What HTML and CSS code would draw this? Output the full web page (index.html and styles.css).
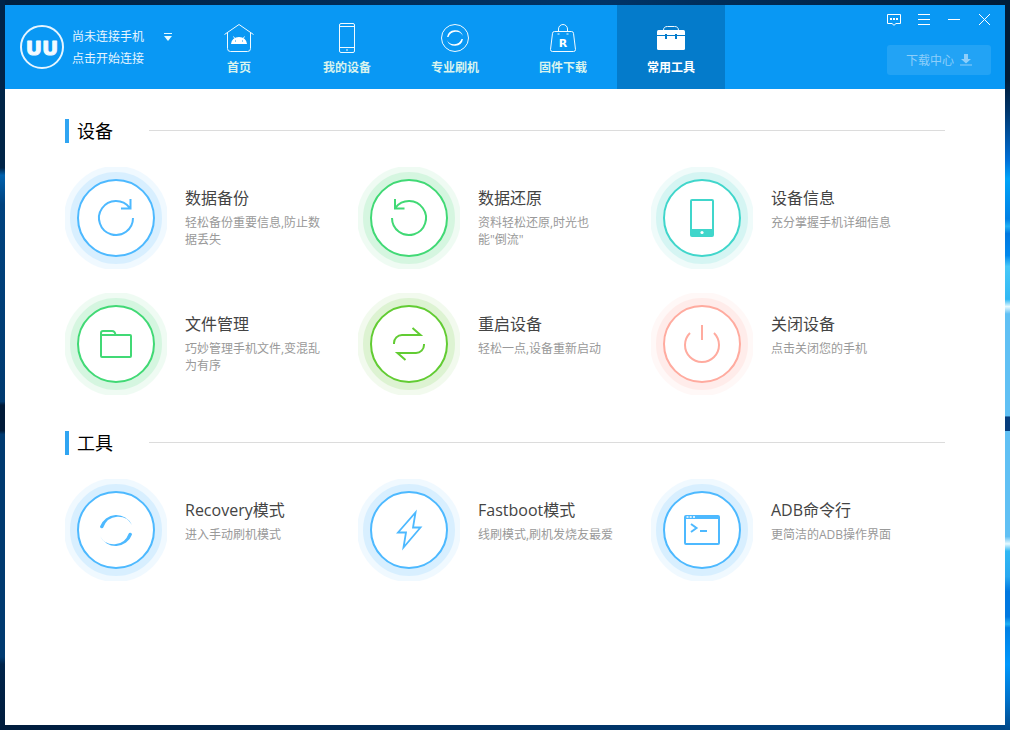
FILE: index.html
```html
<!DOCTYPE html>
<html lang="zh-CN">
<head>
<meta charset="utf-8">
<title>常用工具</title>
<link rel="stylesheet" href="styles.css">
</head>
<body>
<svg class="defs" aria-hidden="true">
  <symbol id="rings" viewBox="0 0 102 102">
    <circle cx="51" cy="51" r="51" fill="currentColor" opacity=".08"/>
    <circle cx="51" cy="51" r="45" fill="currentColor" opacity=".14"/>
    <circle cx="51" cy="51" r="38" fill="#fff" stroke="currentColor" stroke-width="2"/>
  </symbol>
</svg>
<div class="window">
  <header class="header">
    <div class="device">
      <svg class="logo" viewBox="0 0 44 44" role="img" aria-label="UU">
        <circle cx="22" cy="22" r="21" fill="none" stroke="#e6f5ff" stroke-width="2"/>
        <text class="logo-text" x="22" y="30" text-anchor="middle">UU</text>
      </svg>
      <div class="device-text">
        <div>尚未连接手机</div>
        <a href="#connect">点击开始连接</a>
      </div>
      <button class="device-menu" aria-label="选择设备">
        <svg viewBox="0 0 12 10"><path d="M2 1.500h8" stroke="#e6fbff"/><path d="M2 4h8L6 9z" fill="#e6fbff"/></svg>
      </button>
    </div>
    <nav class="nav">
      <a class="nav-item" href="#home">
        <svg class="nav-icon" viewBox="0 0 32 32">
          <path d="M1.500 12.500L16 2.500l14.500 10M4.500 10.500v16a3 3 0 0 0 3 3h17a3 3 0 0 0 3-3v-16"/>
          <path class="solid" d="M8 22a8 7 0 0 1 16 0z"/><path d="M10.500 14.500l2 3M21.500 14.500l-2 3"/>
          <path d="M12 19h1M19 19h1" stroke="#0998f4"/>
        </svg><span>首页</span></a>
      <a class="nav-item" href="#device">
        <svg class="nav-icon" viewBox="0 0 32 32">
          <rect x="8.500" y="1.500" width="15" height="29" rx="1.500"/><path d="M8.500 4.500h15M8.500 25.500h15M15 28h2"/>
        </svg><span>我的设备</span></a>
      <a class="nav-item" href="#flash">
        <svg class="nav-icon" viewBox="0 0 32 32">
          <circle cx="16" cy="16" r="13.500"/>
          <path id="small-arc" class="solid" d="M8 15A8.250 8.250 0 0 1 24 14A7.900 7.900 0 0 0 9.500 15z"/>
          <use href="#small-arc" transform="rotate(180 16 16)"/>
        </svg><span>专业刷机</span></a>
      <a class="nav-item" href="#firmware">
        <svg class="nav-icon" viewBox="0 0 32 32">
          <path d="M7.500 9.500h17a2 2 0 0 1 2 1.800l2 16.200a2 2 0 0 1-2 2h-21a2 2 0 0 1-2-2l2-16.200a2 2 0 0 1 2-1.800zM11.500 9.500V7a4.500 4.500 0 0 1 9 0v2.500"/>
          <path d="M10.500 12h2M19.500 12h2"/>
          <text class="bag-text" x="16" y="25" text-anchor="middle">R</text>
        </svg><span>固件下载</span></a>
      <a class="nav-item active" href="#tools" aria-current="page">
        <svg class="nav-icon" viewBox="0 0 32 32">
          <path d="M8.500 8.500c0-3 1.500-4 4-4h7c2.500 0 4 1 4 4"/>
          <rect class="solid" x="2" y="8" width="28" height="20" rx="1.500"/>
          <path d="M2 13.500h28" stroke="#047bcb"/><path d="M11 12v5M21 12v5" stroke="#047bcb" stroke-width="2"/>
        </svg><span>常用工具</span></a>
    </nav>
    <div class="header-side">
      <div class="controls">
        <button aria-label="反馈"><svg viewBox="0 0 14 14"><path d="M.5 2.500h13v9h-4.500l-2 1.800-2-1.800H.5z"/><path d="M3 7h2M6 7h2M9 7h2" stroke-width="2"/></svg></button>
        <button aria-label="菜单"><svg viewBox="0 0 14 14"><path d="M1 2.500h12M1 7.500h12M1 12.500h12"/></svg></button>
        <button aria-label="最小化"><svg viewBox="0 0 14 14"><path d="M1 7.500h12"/></svg></button>
        <button aria-label="关闭"><svg viewBox="0 0 14 14"><path d="M2 2l11 11M13 2L2 13"/></svg></button>
      </div>
      <button class="download">下载中心
        <svg viewBox="0 0 12 12"><path d="M4 0h4v5h3l-5 4.500L1 5h3zM0 10.500h12v1H0z" fill="currentColor"/></svg>
      </button>
    </div>
  </header>

  <main class="content">
    <section class="section">
      <h2 class="section-title">设备</h2>
      <div class="tools">
        <button class="tool">
          <svg class="emblem blue" viewBox="0 0 102 102"><use href="#rings"/>
            <path d="M68 51A17 17 0 1 1 64.500 40.700M65.500 32v9.500H56"/></svg>
          <span class="tool-text"><span class="tool-name">数据备份</span><span class="tool-desc">轻松备份重要信息,防止数据丢失</span></span>
        </button>
        <button class="tool">
          <svg class="emblem green" viewBox="0 0 102 102"><use href="#rings"/>
            <path d="M34 51A17 17 0 1 0 37.500 40.700M37 32v9.500h9.500"/></svg>
          <span class="tool-text"><span class="tool-name">数据还原</span><span class="tool-desc">资料轻松还原,时光也能"倒流"</span></span>
        </button>
        <button class="tool">
          <svg class="emblem teal" viewBox="0 0 102 102"><use href="#rings"/>
            <rect x="39" y="32" width="24" height="38" rx="2" fill="currentColor" stroke="none"/>
            <path d="M41 34h20v28H41z" fill="#fff" stroke="none"/><circle cx="51" cy="65.500" r="1.600" fill="#fff" stroke="none"/></svg>
          <span class="tool-text"><span class="tool-name">设备信息</span><span class="tool-desc">充分掌握手机详细信息</span></span>
        </button>
        <button class="tool">
          <svg class="emblem green" viewBox="0 0 102 102"><use href="#rings"/>
            <rect x="36" y="42" width="30" height="22" rx="1"/><path d="M36 43v-3a2 2 0 0 1 2-2h9q3 0 3.500 4"/></svg>
          <span class="tool-text"><span class="tool-name">文件管理</span><span class="tool-desc">巧妙管理手机文件,变混乱为有序</span></span>
        </button>
        <button class="tool">
          <svg class="emblem lime" viewBox="0 0 102 102"><use href="#rings"/>
            <path d="M36 51v-1a8 8 0 0 1 8-8h18.500l-8-7M66 51v1a8 8 0 0 1-8 8H39.500l8 7"/></svg>
          <span class="tool-text"><span class="tool-name">重启设备</span><span class="tool-desc">轻松一点,设备重新启动</span></span>
        </button>
        <button class="tool">
          <svg class="emblem pink" viewBox="0 0 102 102"><use href="#rings"/>
            <path d="M39 40a17 17 0 1 0 24 0M51 32v15"/></svg>
          <span class="tool-text"><span class="tool-name">关闭设备</span><span class="tool-desc">点击关闭您的手机</span></span>
        </button>
      </div>
    </section>

    <section class="section">
      <h2 class="section-title">工具</h2>
      <div class="tools">
        <button class="tool">
          <svg class="emblem blue" viewBox="0 0 102 102"><use href="#rings"/>
            <g fill="currentColor" stroke="none"><path id="arc" d="M35 47.500A17.300 17.300 0 0 1 67 46A15.600 15.600 0 0 0 38.500 48a1.800 1.800 0 0 1-3.500-.5z"/><use href="#arc" transform="rotate(180 51 51.500)"/></g></svg>
          <span class="tool-text"><span class="tool-name">Recovery模式</span><span class="tool-desc">进入手动刷机模式</span></span>
        </button>
        <button class="tool">
          <svg class="emblem blue" viewBox="0 0 102 102"><use href="#rings"/>
            <path d="M57.500 33.500L55 48.500h7.500L45.500 68.500 48 53.500h-8z" stroke-width="1.800"/></svg>
          <span class="tool-text"><span class="tool-name">Fastboot模式</span><span class="tool-desc">线刷模式,刷机发烧友最爱</span></span>
        </button>
        <button class="tool">
          <svg class="emblem blue" viewBox="0 0 102 102"><use href="#rings"/>
            <rect x="34" y="37" width="34" height="28" rx="1"/><path d="M34 38.500h34" stroke-width="3"/>
            <path d="M35.500 38h2M38.700 38h2M42 38h2" stroke="#fff" stroke-width="1.500"/><path d="M40 45l5.500 4-5.500 4M49 52h7"/></svg>
          <span class="tool-text"><span class="tool-name">ADB命令行</span><span class="tool-desc">更简洁的ADB操作界面</span></span>
        </button>
      </div>
    </section>
  </main>
</div>
</body>
</html>
```
FILE: styles.css
```css
* { box-sizing: border-box; }

body {
  margin: 0;
  padding: 5px;
  min-height: 100vh;
  display: flex;
  font: 12px/17px "Open Sans", "Noto Sans CJK SC", sans-serif;
  background:
    linear-gradient(#002447 23%, #0060ac 24%, #00427e 28%, #003a70 55%, #001a38 55.5%, #001a38 59%, #003a70 59.5%, #003a70 90%, #00244a 91%, #001c3c) left / 5px 100% no-repeat,
    linear-gradient(#001c38 11%, #003468 15%, #0070d8 22%, #00a4f8 24.500%, #0080e4 30%, #20b0f4 31%, #0078e0 32%, #0088ec 35%, #48c8f8 36.500%, #30b8f4 41%, #e8faff 42%, #60c0f4 43%, #60c0f4 57%, #063c7c 57.100%, #063c7c 59%, #60c0f4 59.100%, #60c0f4 73.500%, #e8faff 74.500%, #30b8f4 75.500%, #28a8f0 79%, #0078e0 81%, #0078e0 84.500%, #20b0f4 85.500%, #0080e4 86%, #0098fc 91%, #0070c8 96%, #004888) right / 5px 100% no-repeat,
    linear-gradient(90deg, #002040, #003468 60%, #002448 85%, #001c38) top / 100% 5px no-repeat,
    linear-gradient(90deg, #001c3c, #003468 60%, #004888) #002448;
}

button {
  padding: 0;
  border: 0;
  background: none;
  font: inherit;
  color: inherit;
  text-align: left;
  cursor: pointer;
}

a { color: inherit; text-decoration: none; }
svg { display: block; flex: none; }
.defs { position: absolute; width: 0; height: 0; }

.window { flex: 1; background: #fff; }

.header {
  display: flex;
  height: 84px;
  background: #0998f4;
  color: #e6f5ff;
}

.device {
  display: flex;
  align-items: center;
  width: 180px;
  padding-left: 15px;
  gap: 8px;
}
.logo { width: 44px; height: 44px; }
.logo-text {
  font: bold 20px "DejaVu Sans", sans-serif;
  fill: #f4faff;
  stroke: #f4faff;
  stroke-linejoin: round;
}
.device-text { padding-top: 2px; line-height: 22px; }
.device-menu { align-self: flex-start; margin: 27px 0 0 10px; }
.device-menu svg { width: 12px; height: 10px; }

.nav { display: flex; }
.nav-item {
  display: flex;
  flex-direction: column;
  align-items: center;
  gap: 5px;
  width: 108px;
  padding-top: 17px;
  font-weight: bold;
  color: #d8f3ee;
}
.nav-item.active { background: #047bcb; color: #fff; }
.nav-icon { width: 32px; height: 32px; fill: none; stroke: #f0faff; }
.nav-icon .solid { fill: #fff; stroke: none; }
.bag-text { font: bold 11px "DejaVu Sans", sans-serif; fill: #fff; stroke: none; }

.header-side {
  display: flex;
  flex-direction: column;
  gap: 19px;
  margin-left: auto;
  padding: 7px 14px 0 0;
}
.controls { display: flex; gap: 16px; }
.controls svg { width: 14px; height: 14px; fill: none; stroke: #fff; }
.download {
  display: flex;
  align-items: center;
  justify-content: center;
  gap: 6px;
  height: 30px;
  border-radius: 3px;
  background: #22a3f5;
  color: #8dcefa;
}
.download svg { width: 12px; height: 12px; }

.content {
  display: grid;
  gap: 36px;
  padding: 30px 60px;
}
.section-title {
  display: flex;
  align-items: center;
  gap: 36px;
  margin: 0 0 24px;
  padding-left: 8px;
  border-left: 4px solid #30a5f2;
  font-size: 18px;
  font-weight: normal;
  line-height: 24px;
  color: #000;
}
.section-title::after {
  content: "";
  flex: 1;
  height: 1px;
  margin-bottom: 1px;
  background: #dcdcdc;
}
.tools {
  display: grid;
  grid-template-columns: repeat(3, 1fr);
  row-gap: 24px;
  margin-right: 1px;
}
.tool { display: flex; align-items: flex-start; gap: 18px; }
.emblem { width: 102px; height: 102px; fill: none; stroke: currentColor; stroke-width: 2; }
.blue { color: #4db9ff; }
.green { color: #41d975; }
.teal { color: #40d6cb; }
.lime { color: #62cc33; }
.pink { color: #ffab9f; }

.tool-text {
  display: flex;
  flex-direction: column;
  gap: 5px;
  max-width: 138px;
  padding-top: 20px;
}
.tool-name { font-size: 16px; line-height: 22px; color: #444; }
.tool-desc { color: #999; }
```
